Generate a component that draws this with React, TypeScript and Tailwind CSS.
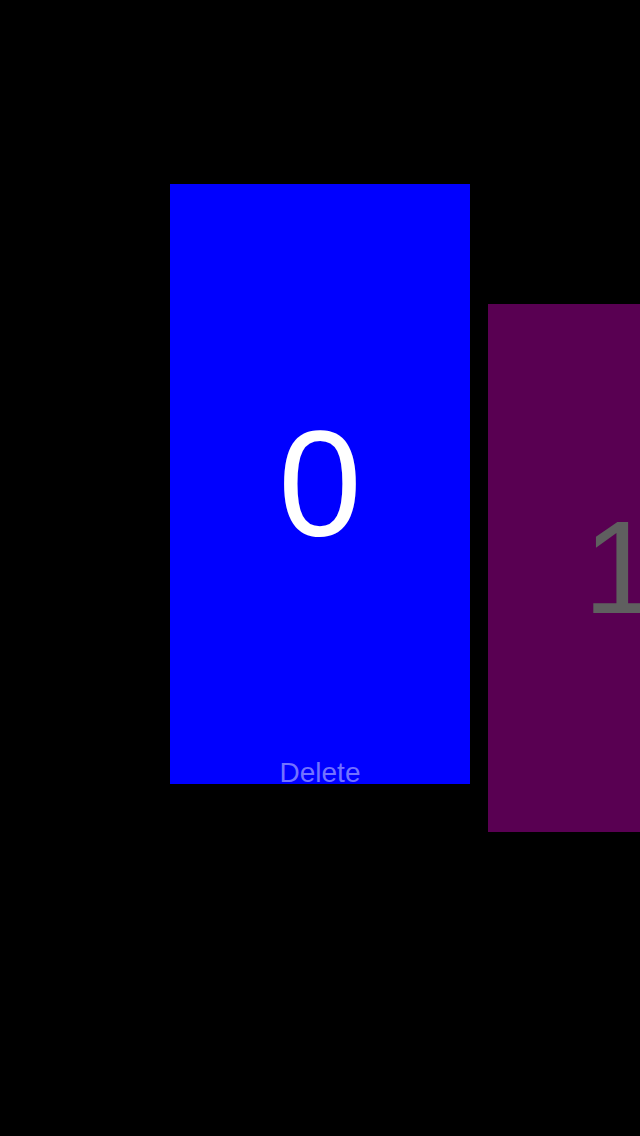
import React from 'react';

const font = { fontFamily: '"Liberation Sans", Arial, sans-serif' };

function Card({ label, big, className, numClass, showDelete }: { label: string; big: string; className: string; numClass: string; showDelete?: boolean }) {
  return (
    <div className={`relative shrink-0 flex items-center justify-center ${className}`}>
      <span className={`leading-none ${numClass}`}>{big}</span>
      {showDelete && (
        <span className="absolute left-0 right-0 bottom-[-3px] text-center text-[28px] leading-none text-[#7272ff]">{label}</span>
      )}
    </div>
  );
}

export default function App() {
  return (
    <div className="h-[1136px] w-[640px] overflow-hidden bg-black" style={font}>
      <div className="flex items-start gap-[18px] pl-[170px] pt-[184px]">
        <Card label="Delete" big="0" showDelete className="h-[600px] w-[300px] bg-[#0000ff]" numClass="text-[150px] text-white" />
        <Card label="Delete" big="1" className="mt-[120px] h-[528px] w-[264px] bg-[#590052]" numClass="text-[132px] text-[#5f5f5f]" />
      </div>
    </div>
  );
}
